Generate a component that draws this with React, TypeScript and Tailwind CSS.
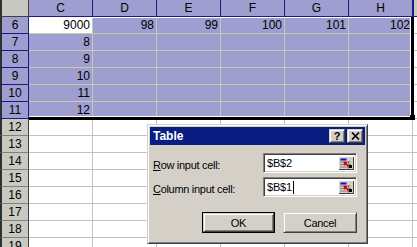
import React from 'react';

const LAV = 'bg-[#9e9ed0]';
const cols = ['C', 'D', 'E', 'F', 'G', 'H'];
const rows = [6, 7, 8, 9, 10, 11, 12, 13, 14, 15, 16, 17, 18, 19];

function cellValue(r: number, ci: number): string {
  if (r === 6) {
    if (ci === 0) return '9000';
    return String(97 + ci);
  }
  if (r >= 7 && r <= 11 && ci === 0) return String(r + 1);
  return '';
}

function RaisedBtn({ children, className = '' }: { children: React.ReactNode; className?: string }) {
  return (
    <div
      className={`flex items-center justify-center bg-[#d4d0c8] border border-t-[#d4d0c8] border-l-[#d4d0c8] border-r-[#404040] border-b-[#404040] shadow-[inset_1px_1px_0_#fff,inset_-1px_-1px_0_#808080] ${className}`}
    >
      {children}
    </div>
  );
}

function CollapseIcon() {
  return (
    <svg width="12" height="11" viewBox="0 0 12 11">
      <rect x="0.5" y="0.5" width="6" height="2" fill="#1010c0" />
      <line x1="0" y1="4" x2="11" y2="4" stroke="#808080" strokeWidth="1" />
      <line x1="0" y1="6.5" x2="11" y2="6.5" stroke="#808080" strokeWidth="1" />
      <line x1="0" y1="9" x2="11" y2="9" stroke="#808080" strokeWidth="1" />
      <line x1="8.5" y1="3" x2="8.5" y2="11" stroke="#808080" strokeWidth="1" />
      <rect x="9" y="7" width="3" height="3" fill="#000" />
      <line x1="9" y1="9" x2="5.5" y2="5.5" stroke="#e00000" strokeWidth="1.6" />
      <polygon points="3.5,3.5 8,4 4,8" fill="#e00000" />
    </svg>
  );
}

function RefInput({ value, caret }: { value: string; caret?: boolean }) {
  return (
    <div className="relative w-[94px] h-[20px] bg-white border border-t-[#808080] border-l-[#808080] border-r-white border-b-white shadow-[inset_1px_1px_0_#404040,inset_-1px_-1px_0_#d4d0c8] flex items-center pl-[3px]">
      <span className="text-[11px] tracking-[-0.2px] leading-[14px]">{value}</span>
      {caret && <span className="ml-[1px] w-[1px] h-[13px] bg-black" />}
      <div className="absolute right-[2px] top-[2px] w-[16px] h-[14px] flex items-center justify-center bg-[#d4d0c8] shadow-[inset_1px_1px_0_#fff,inset_-1px_-1px_0_#404040]">
        <CollapseIcon />
      </div>
    </div>
  );
}

export default function App() {
  return (
    <div className="relative w-[417px] h-[247px] overflow-hidden bg-white font-['Liberation_Sans',Arial,sans-serif] text-[12px] text-black">
      {/* header row */}
      <div className="flex h-[17px]">
        <div className="w-[29px] h-[17px] shrink-0 bg-[#c8cac2] border-l-2 border-l-[#303030] border-r border-b border-r-[#404040] border-b-[#404040]" />
        {cols.map((c) => (
          <div
            key={c}
            className={`w-[64px] h-[17px] shrink-0 ${LAV} border-r border-b border-[#1c1c80] flex items-center justify-center leading-[16px]`}
          >
            {c}
          </div>
        ))}
        <div className="flex-1 h-[17px] bg-[#c8cac2] border-l border-b border-[#1c1c80]" />
      </div>
      {rows.map((r) => {
        const sel = r <= 11;
        return (
          <div key={r} className="flex h-[17px]">
            <div
              className={`w-[29px] h-[17px] shrink-0 border-l-2 border-l-[#303030] border-r border-b flex items-center justify-center leading-[16px] ${
                sel ? `${LAV} border-r-[#1c1c80] border-b-[#1c1c80]` : 'bg-[#c8cac2] border-r-[#404040] border-b-[#808080]'
              }`}
            >
              {r}
            </div>
            {cols.map((c, ci) => {
              const active = r === 6 && ci === 0;
              return (
                <div
                  key={c}
                  className={`w-[64px] h-[17px] shrink-0 border-r border-b flex items-center justify-end pr-[2px] leading-[16px] ${
                    sel ? (active ? 'bg-white border-[#c9c9b0]' : `${LAV} border-[#c9c9b0]`) : 'bg-white border-[#c0c0c0]'
                  }`}
                >
                  {cellValue(r, ci)}
                </div>
              );
            })}
            <div className="flex-1 h-[17px] bg-white border-b border-[#c0c0c0]" />
          </div>
        );
      })}

      {/* selection border */}
      <div className="absolute left-[29px] top-[17px] w-[385px] h-[103px] border-r-[3px] border-b-[3px] border-black">
        <div className="w-full h-full border-t border-r border-b border-white" />
      </div>
      <div className="absolute left-[410px] top-[115px] w-[5px] h-[5px] bg-black" />

      {/* dialog */}
      <div className="absolute left-[147px] top-[124px] w-[221px] h-[120px] bg-[#d4d0c8] border border-t-[#d4d0c8] border-l-[#d4d0c8] border-r-[#404040] border-b-[#404040] shadow-[inset_1px_1px_0_#fff,inset_-1px_-1px_0_#808080] p-[2px] flex flex-col">
        <div className="h-[18px] bg-[#0a1e82] flex items-center justify-between pl-[3px] pr-[2px]">
          <span className="text-white font-bold text-[12px] leading-[14px]">Table</span>
          <div className="flex gap-[2px]">
            <RaisedBtn className="w-[16px] h-[14px]">
              <span className="font-bold text-[11px] leading-[11px]">?</span>
            </RaisedBtn>
            <RaisedBtn className="w-[16px] h-[14px]">
              <svg width="9" height="8" viewBox="0 0 9 8">
                <path d="M1 0.5 L8 7.5 M8 0.5 L1 7.5" stroke="#000" strokeWidth="1.6" />
              </svg>
            </RaisedBtn>
          </div>
        </div>
        <div className="flex flex-col pl-[3px] pr-[8px] text-[11px] tracking-[-0.3px]">
          <div className="flex items-center justify-between mt-[8px]">
            <span className="pt-[3px] leading-[14px]">
              <span className="underline underline-offset-[1px]">R</span>ow input cell:
            </span>
            <RefInput value="$B$2" />
          </div>
          <div className="flex items-center justify-between mt-[4px]">
            <span className="pt-[4px] leading-[14px]">
              <span className="underline underline-offset-[1px]">C</span>olumn input cell:
            </span>
            <RefInput value="$B$1" caret />
          </div>
          <div className="flex justify-end gap-[8px] mt-[15px]">
            <div className="w-[73px] h-[21px] border border-black">
              <RaisedBtn className="w-full h-full">
                <span className="leading-[14px]">OK</span>
              </RaisedBtn>
            </div>
            <RaisedBtn className="w-[74px] h-[21px]">
              <span className="leading-[14px]">Cancel</span>
            </RaisedBtn>
          </div>
        </div>
      </div>
    </div>
  );
}
